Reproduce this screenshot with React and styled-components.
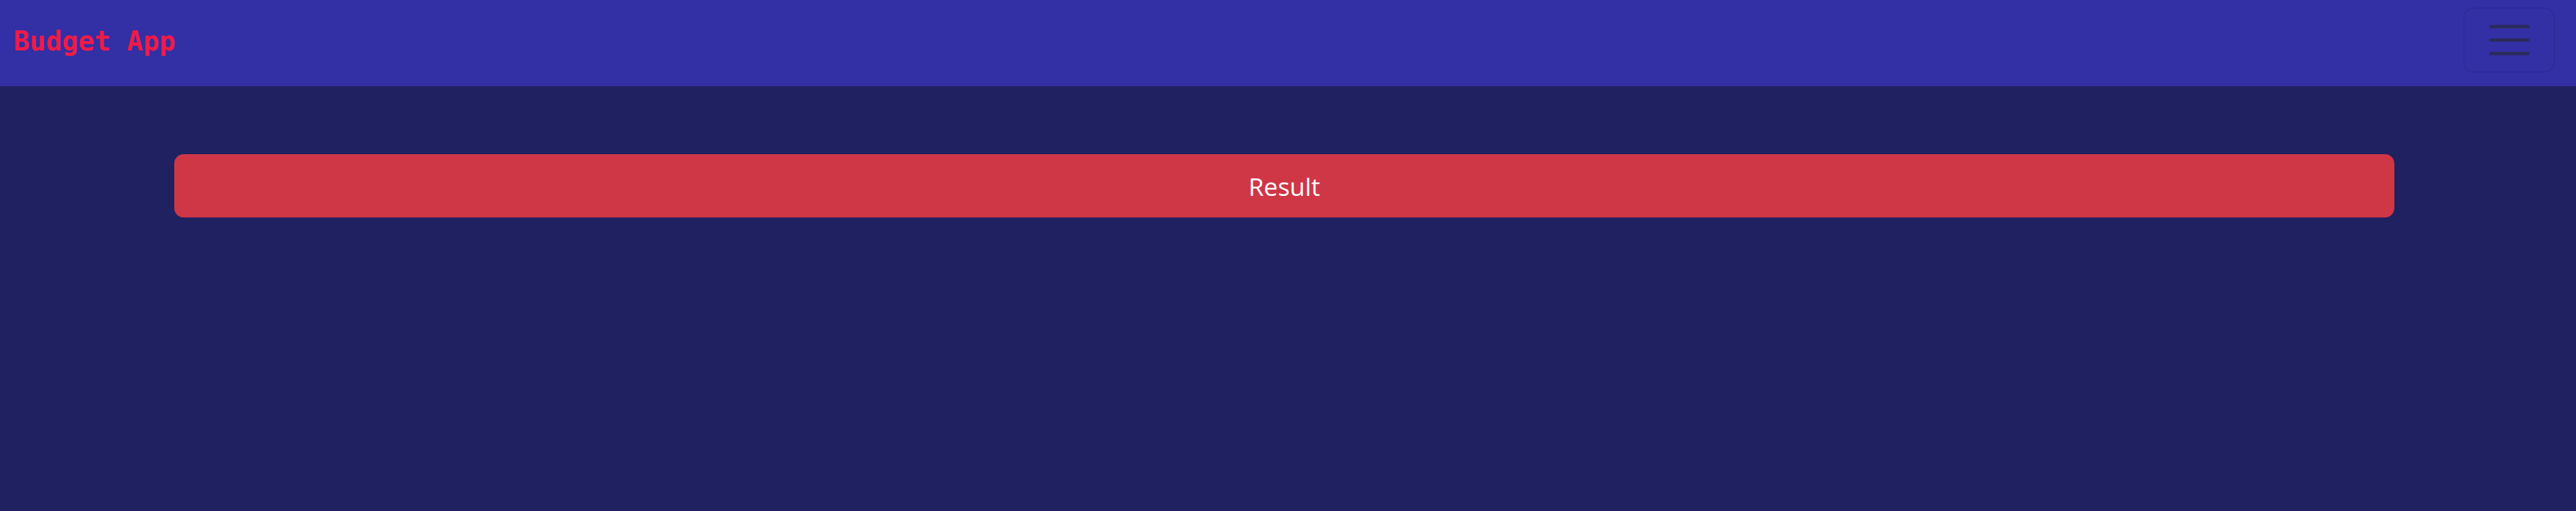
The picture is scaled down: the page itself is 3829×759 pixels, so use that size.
import React from 'react';
import styled, { createGlobalStyle } from 'styled-components';

const GlobalStyle = createGlobalStyle`
  html, body {
    margin: 0;
    padding: 0;
    background: #202160;
    min-height: 100%;
  }
  body {
    font-family: "Open Sans", "Noto Sans", sans-serif;
  }
`;

const Page = styled.div`
  min-height: 759px;
  background: #202160;
`;

const Navbar = styled.nav`
  height: 128px;
  background: #332fa5;
  display: flex;
  align-items: center;
  justify-content: space-between;
  padding: 0 31px 0 20px;
  box-sizing: border-box;
`;

const Brand = styled.a`
  font-family: "DejaVu Sans Mono", "Liberation Mono", monospace;
  font-weight: bold;
  font-size: 40px;
  color: #ef1b47;
  text-decoration: none;
  margin-top: -6px;
`;

const Toggler = styled.button`
  width: 137px;
  height: 97px;
  margin-top: -10px;
  border: 2px solid rgba(0, 0, 0, 0.08);
  border-radius: 16px;
  background: transparent;
  display: flex;
  flex-direction: column;
  align-items: center;
  justify-content: center;
  gap: 15px;
  padding: 0;
  cursor: pointer;
`;

const Bar = styled.span`
  display: block;
  width: 60px;
  height: 5px;
  border-radius: 3px;
  background: #2a2b5c;
`;

const Main = styled.main`
  padding: 101px 270px 0 259px;
`;

const ResultButton = styled.button`
  width: 100%;
  height: 94px;
  border: none;
  border-radius: 14px;
  background: #cf3747;
  color: #ffffff;
  font-family: "Open Sans", "Noto Sans", sans-serif;
  font-size: 37px;
  cursor: pointer;
`;

export default function App() {
  return (
    <>
      <GlobalStyle />
      <Page>
        <Navbar>
          <Brand href="#">Budget App</Brand>
          <Toggler aria-label="Toggle navigation">
            <Bar />
            <Bar />
            <Bar />
          </Toggler>
        </Navbar>
        <Main>
          <ResultButton>Result</ResultButton>
        </Main>
      </Page>
    </>
  );
}
